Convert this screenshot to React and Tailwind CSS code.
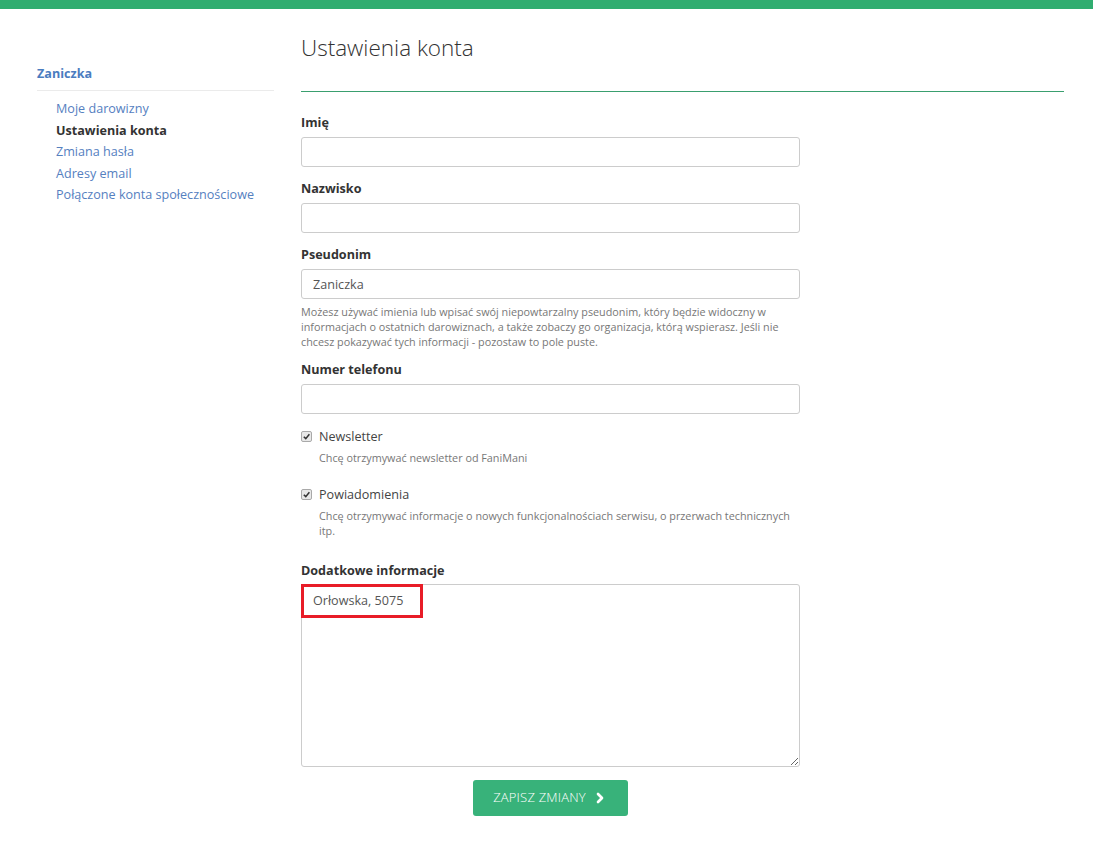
import React from 'react';
import { ChevronRight } from 'lucide-react';

const sideLinks = [
  { label: 'Moje darowizny' },
  { label: 'Ustawienia konta', active: true },
  { label: 'Zmiana hasła' },
  { label: 'Adresy email' },
  { label: 'Połączone konta społecznościowe' },
];

const Field = ({ label, value, children }) => (
  <div className="mb-[13px]">
    <label className="block text-[12.6px] leading-[18px] font-bold text-[#333] mb-[5px]">{label}</label>
    <input
      readOnly
      value={value || ''}
      className="block w-[499px] h-[30px] px-[11px] border border-[#ccc] rounded-[3px] text-[12.6px] text-[#555] bg-white outline-none"
    />
    {children}
  </div>
);

const Check = ({ label, help }) => (
  <div className="flex items-start">
    <span className="mt-[3px] w-[11px] h-[11px] rounded-[2px] border border-[#a9a9a9] bg-[#e8e8e8] flex items-center justify-center">
      <svg width="9" height="9" viewBox="0 0 10 10">
        <path d="M2 5.2 L4.2 7.4 L8.2 2.6" fill="none" stroke="#333" strokeWidth="1.7" />
      </svg>
    </span>
    <div className="ml-[7px]">
      <div className="text-[12.6px] leading-[18px] text-[#444]">{label}</div>
      <div className="mt-[4px] text-[10.8px] leading-[15px] text-[#777] w-[485px]">{help}</div>
    </div>
  </div>
);

export default function App() {
  return (
    <div className="min-h-[855px] bg-white" style={{ fontFamily: '"Open Sans", "Noto Sans", sans-serif' }}>
      <div className="h-[9px] bg-[#30ad70]"></div>
      <div className="flex pl-[37px]">
        {/* sidebar */}
        <aside className="w-[237px] pt-[56px]">
          <div className="text-[12.6px] leading-[18px] font-bold text-[#4a7cc0] pb-[7px] border-b border-[#ebebeb]">
            Zaniczka
          </div>
          <ul className="pl-[19px] pt-[7px]">
            {sideLinks.map((l) => (
              <li
                key={l.label}
                className={`text-[12.6px] leading-[21.5px] ${l.active ? 'font-bold text-[#333]' : 'text-[#5580bf]'}`}
              >
                {l.label}
              </li>
            ))}
          </ul>
        </aside>

        {/* main */}
        <main className="ml-[27px] w-[763px]">
          <h1 className="pt-[26px] text-[22.5px] leading-[26px] font-light text-[#333]">Ustawienia konta</h1>
          <div className="mt-[30px] h-px bg-[#3a9f6f]"></div>

          <div className="pt-[22px]">
            <Field label="Imię" />
            <Field label="Nazwisko" />
            <div className="mb-[12px]">
              <label className="block text-[12.6px] leading-[18px] font-bold text-[#333] mb-[5px]">Pseudonim</label>
              <input
                readOnly
                value="Zaniczka"
                className="block w-[499px] h-[30px] px-[11px] border border-[#ccc] rounded-[3px] text-[12.6px] text-[#555] bg-white outline-none"
              />
              <p className="mt-[5px] w-[499px] text-[10.8px] leading-[15px] text-[#777]">
                Możesz używać imienia lub wpisać swój niepowtarzalny pseudonim, który będzie widoczny w informacjach o ostatnich darowiznach, a także zobaczy go organizacja, którą wspierasz. Jeśli nie chcesz pokazywać tych informacji - pozostaw to pole puste.
              </p>
            </div>
            <Field label="Numer telefonu" />

            <div className="pt-[1px]">
              <Check label="Newsletter" help="Chcę otrzymywać newsletter od FaniMani" />
            </div>
            <div className="pt-[21px]">
              <Check
                label="Powiadomienia"
                help="Chcę otrzymywać informacje o nowych funkcjonalnościach serwisu, o przerwach technicznych itp."
              />
            </div>

            <div className="pt-[24px]">
              <label className="block text-[12.6px] leading-[18px] font-bold text-[#333] mb-[4px]">Dodatkowe informacje</label>
              <div className="relative w-[499px]">
                <textarea
                  readOnly
                  value="Orłowska, 5075"
                  className="block w-[499px] h-[183px] px-[11px] py-[6px] border border-[#ccc] rounded-[3px] text-[12.6px] leading-[20px] text-[#555] bg-white outline-none resize-y"
                />
                <div className="absolute left-0 top-0 w-[122px] h-[34px] border-[3px] border-[#e81c27]"></div>
              </div>
            </div>

            <div className="w-[499px] flex justify-center mt-[13px]">
              <button className="w-[155px] h-[36px] rounded-[3px] bg-[#38b27a] text-white text-[13px] font-light tracking-[0.2px] flex items-center justify-center gap-[6px]">
                ZAPISZ ZMIANY
                <ChevronRight size={16} strokeWidth={4} />
              </button>
            </div>
          </div>
        </main>
      </div>
    </div>
  );
}
